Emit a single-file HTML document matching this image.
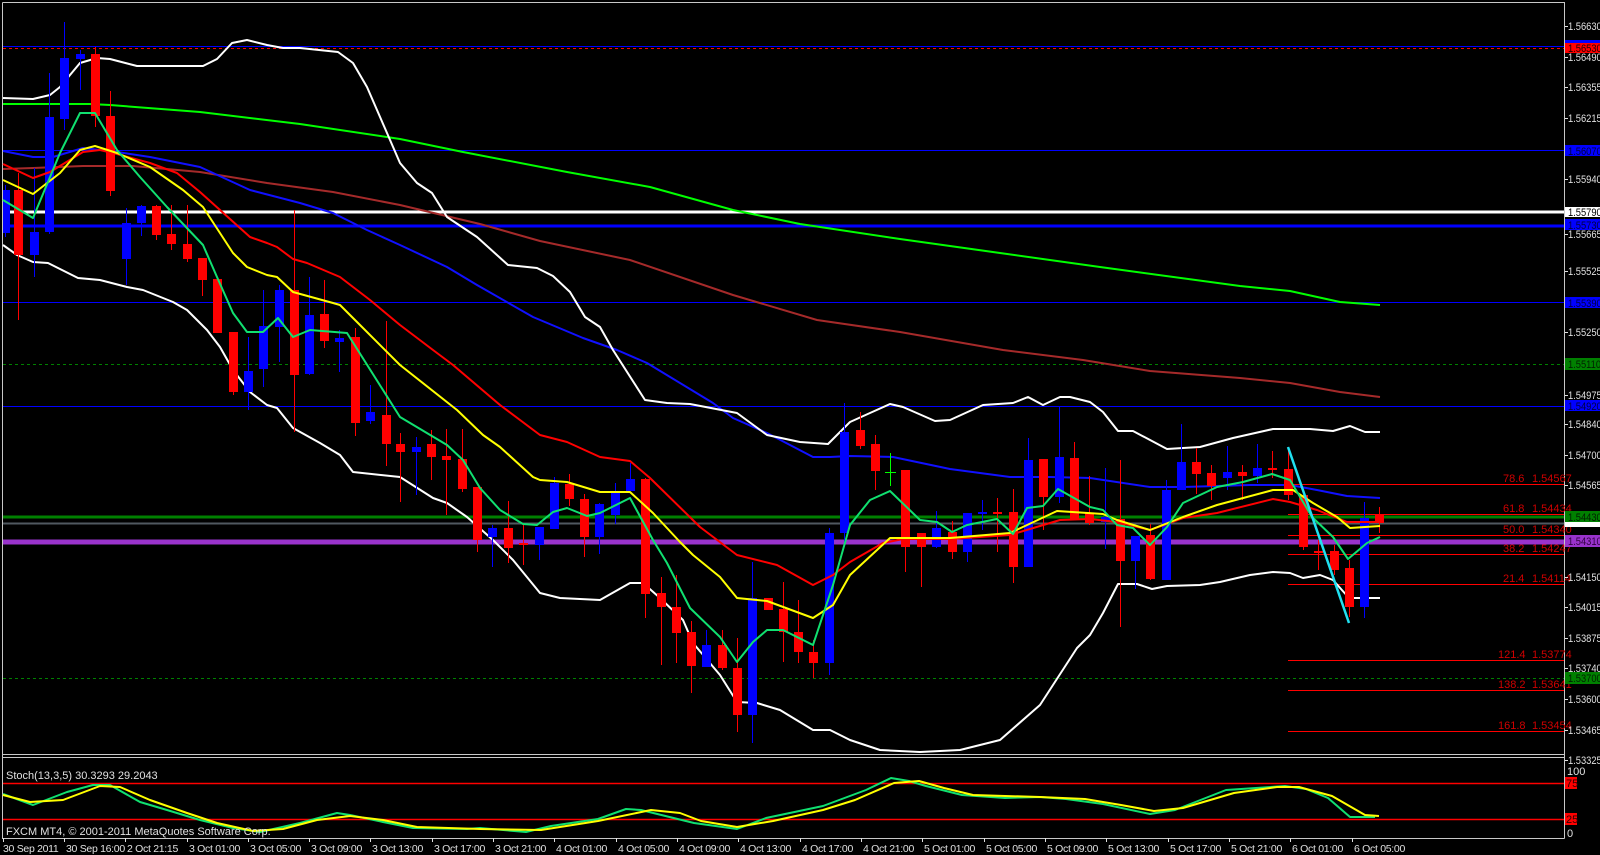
<!DOCTYPE html>
<html><head><meta charset="utf-8"><style>
html,body{margin:0;padding:0;background:#000;width:1600px;height:855px;overflow:hidden}
svg{display:block}
text{font-family:"Liberation Sans",sans-serif;font-size:11px}
.ta text{font-size:10.5px;letter-spacing:-0.3px}
</style></head><body>
<svg width="1600" height="855" viewBox="0 0 1600 855" xmlns="http://www.w3.org/2000/svg">
<rect width="1600" height="855" fill="#000"/>
<g stroke="#c8c8c8" stroke-width="1" fill="none">
<path d="M2.5 2.5H1564.5V838.5M2.5 2.5V838.5H1564.5M2.5 754.5H1564.5M2.5 757.5H1564.5"/>
</g>
<g fill="none">
<path d="M3 46.5H1564M3 150.5H1564M3 302.5H1564M3 406.5H1564" stroke="#0000ff"/>
<path d="M3 48.5H1564" stroke="#ff0000" stroke-dasharray="3,3"/>
<path d="M3 212H1564" stroke="#fff" stroke-width="3"/>
<path d="M3 226H1564" stroke="#0000ff" stroke-width="3"/>
<path d="M3 364.5H1564M3 678.5H1564" stroke="#008000" stroke-dasharray="3,3"/>
<path d="M3 517H1564" stroke="#008000" stroke-width="3"/>
<path d="M3 523.5H1564" stroke="#505860" stroke-width="2"/>
<path d="M3 542H1564" stroke="#9933cc" stroke-width="5"/>
<path d="M1288 484.5H1564M1288 514.5H1564M1288 535.5H1564M1288 554.5H1564M1288 584.5H1564M1288 660.5H1564M1288 690.5H1564M1288 731.5H1564" stroke="#ff0000"/>
</g>
<g fill="none" stroke-width="2" stroke-linejoin="round">
<polyline stroke="#00ff00" points="3,104 90,104 110,105 200,112 300,124 400,139 463,152 567,172 650,187 733,210 800,224 900,239 1000,253 1100,267 1240,286 1290,291 1340,302 1380,305"/>
<polyline stroke="#a52a2a" points="3,169 33,168 83,166 133,166 200,172 267,183 333,192 400,205 480,224 540,241 630,260 733,295 817,320 900,332 1003,350 1083,360 1150,371 1240,378 1290,383 1340,392 1380,397"/>
<polyline stroke="#1010ff" points="3,151 33,157 53,157 83,148 117,152 150,157 200,167 250,190 300,203 333,213 367,230 400,245 447,267 477,285 533,317 583,338 617,350 647,363 713,403 733,418 767,433 813,457 830,457 850,456 893,457 950,469 1010,477 1050,477 1090,478 1150,487 1183,487 1250,485 1290,485 1317,490 1347,496 1380,498"/>
<polyline stroke="#ffffff" points="3,98 33,99 50,95 60,87 80,63 97,58 110,59 137,66 203,66 217,59 232,43 247,40 267,45 283,48 300,48 338,52 353,63 367,87 387,133 400,163 417,183 432,193 447,217 477,237 508,265 537,268 553,276 570,292 585,317 600,327 613,350 645,400 667,403 690,404 737,413 767,435 800,442 828,444 847,425 850,422 870,413 890,404 903,407 935,421 950,420 983,405 1013,403 1028,397 1043,405 1060,397 1070,397 1090,402 1103,412 1118,431 1133,431 1167,449 1183,448 1200,447 1233,438 1273,429 1310,429 1333,431 1350,426 1365,432 1380,432"/>
<polyline stroke="#ffffff" points="3,245 17,255 33,262 48,263 78,278 100,280 127,287 143,290 173,302 187,310 207,330 220,347 233,370 250,392 267,405 277,408 293,428 320,443 340,455 353,472 400,477 433,498 447,503 467,517 493,540 513,560 540,593 560,598 600,600 630,583 643,583 660,598 683,620 693,643 720,675 737,702 757,703 780,710 813,730 830,730 850,740 880,750 920,752 960,750 1000,740 1040,705 1077,648 1090,635 1103,613 1118,584 1137,584 1152,589 1167,586 1200,585 1220,582 1250,575 1273,572 1290,573 1303,578 1320,575 1333,580 1349,598 1380,598"/>
</g>
<g fill="#ff0000">
<path stroke="#ff0000" stroke-width="1" d="M18.5 173V320M95.5 47V127M110.5 91V196M156.5 205V240M171.5 205V250M187.5 205V262M202.5 258V296M217.5 279V333M233.5 332V395M294.5 210V432M324.5 280V348M355.5 328V436M386.5 321V466M400.5 433V502M431.5 430V480M446.5 429V515M462.5 429V492M477.5 487V552M508.5 501V563M523.5 525V565M569.5 474V506M584.5 494V557M645.5 478V618M661.5 577V665M676.5 575V663M691.5 621V693M722.5 630V670M737.5 638V732M768.5 598V610M783.5 582V662M798.5 600V663M813.5 640V678M860.5 412V449M875.5 435V490M905.5 470V572M921.5 533V587M952.5 521V559M997.5 498V552M1013.5 489V583M1043.5 459V530M1074.5 442V520M1089.5 476V525M1120.5 460V627M1150.5 524V580M1196.5 448V494M1211.5 465V500M1242.5 465V500M1272.5 451V478M1288.5 451V500M1303.5 495V550M1318.5 540V570M1334.5 545V575M1349.5 560V617M1379.5 507V533"/>
<rect x="14" y="190" width="9" height="65"/><rect x="91" y="54" width="9" height="62"/><rect x="106" y="116" width="9" height="75"/><rect x="152" y="206" width="9" height="29"/><rect x="167" y="234" width="9" height="10"/><rect x="183" y="244" width="9" height="15"/><rect x="198" y="258" width="9" height="22"/><rect x="213" y="279" width="9" height="54"/><rect x="229" y="332" width="9" height="60"/><rect x="290" y="290" width="9" height="85"/><rect x="320" y="314" width="9" height="27"/><rect x="351" y="337" width="9" height="86"/><rect x="382" y="415" width="9" height="29"/><rect x="396" y="444" width="9" height="8"/><rect x="427" y="444" width="9" height="13"/><rect x="442" y="456" width="9" height="4"/><rect x="458" y="459" width="9" height="30"/><rect x="473" y="487" width="9" height="53"/><rect x="504" y="528" width="9" height="20"/><rect x="519" y="543" width="9" height="2"/><rect x="565" y="484" width="9" height="15"/><rect x="580" y="499" width="9" height="38"/><rect x="641" y="479" width="9" height="115"/><rect x="657" y="593" width="9" height="14"/><rect x="672" y="607" width="9" height="26"/><rect x="687" y="632" width="9" height="34"/><rect x="718" y="645" width="9" height="23"/><rect x="733" y="668" width="9" height="47"/><rect x="764" y="598" width="9" height="12"/><rect x="779" y="609" width="9" height="23"/><rect x="794" y="632" width="9" height="20"/><rect x="809" y="652" width="9" height="11"/><rect x="856" y="430" width="9" height="16"/><rect x="871" y="444" width="9" height="27"/><rect x="901" y="470" width="9" height="77"/><rect x="917" y="533" width="9" height="14"/><rect x="948" y="532" width="9" height="20"/><rect x="993" y="512" width="9" height="2"/><rect x="1009" y="512" width="9" height="55"/><rect x="1039" y="459" width="9" height="38"/><rect x="1070" y="458" width="9" height="62"/><rect x="1085" y="513" width="9" height="10"/><rect x="1116" y="519" width="9" height="42"/><rect x="1146" y="535" width="9" height="44"/><rect x="1192" y="462" width="9" height="12"/><rect x="1207" y="473" width="9" height="13"/><rect x="1238" y="472" width="9" height="4"/><rect x="1268" y="468" width="9" height="2"/><rect x="1284" y="469" width="9" height="26"/><rect x="1299" y="495" width="9" height="52"/><rect x="1314" y="551" width="9" height="2"/><rect x="1330" y="551" width="9" height="19"/><rect x="1345" y="568" width="9" height="39"/><rect x="1375" y="515" width="9" height="8"/>
</g>
<g fill="#0000ff">
<path stroke="#0000ff" stroke-width="1" d="M5.5 185V237M34.5 168V277M49.5 73V234M64.5 22V130M80.5 50V90M126.5 208V285M141.5 205V236M248.5 337V410M263.5 290V387M279.5 285V362M309.5 277V375M339.5 330V372M370.5 385V424M416.5 437V495M492.5 525V567M539.5 527V560M554.5 477V529M599.5 503V554M615.5 483V524M630.5 463V491M706.5 630V667M752.5 562V743M829.5 528V675M844.5 403V545M936.5 511V548M967.5 513V562M982.5 500V530M1028.5 438V567M1059.5 407V503M1105.5 468V549M1135.5 536V589M1166.5 480V580M1181.5 424V490M1227.5 446V490M1257.5 444V483M1364.5 502V618"/>
<rect x="3" y="190" width="7" height="43"/><rect x="30" y="232" width="9" height="23"/><rect x="45" y="117" width="9" height="115"/><rect x="60" y="58" width="9" height="61"/><rect x="76" y="54" width="9" height="5"/><rect x="122" y="223" width="9" height="36"/><rect x="137" y="206" width="9" height="17"/><rect x="244" y="371" width="9" height="21"/><rect x="259" y="326" width="9" height="43"/><rect x="275" y="290" width="9" height="37"/><rect x="305" y="315" width="9" height="59"/><rect x="335" y="338" width="9" height="4"/><rect x="366" y="412" width="9" height="9"/><rect x="412" y="447" width="9" height="5"/><rect x="488" y="528" width="9" height="9"/><rect x="535" y="527" width="9" height="18"/><rect x="550" y="483" width="9" height="46"/><rect x="595" y="504" width="9" height="33"/><rect x="611" y="492" width="9" height="23"/><rect x="626" y="479" width="9" height="12"/><rect x="702" y="645" width="9" height="22"/><rect x="748" y="598" width="9" height="117"/><rect x="825" y="533" width="9" height="130"/><rect x="840" y="432" width="9" height="101"/><rect x="932" y="528" width="9" height="19"/><rect x="963" y="513" width="9" height="39"/><rect x="978" y="512" width="9" height="2"/><rect x="1024" y="460" width="9" height="107"/><rect x="1055" y="457" width="9" height="40"/><rect x="1101" y="517" width="9" height="5"/><rect x="1131" y="536" width="9" height="25"/><rect x="1162" y="490" width="9" height="90"/><rect x="1177" y="462" width="9" height="28"/><rect x="1223" y="472" width="9" height="6"/><rect x="1253" y="468" width="9" height="8"/><rect x="1360" y="518" width="9" height="89"/>
</g>
<path d="M885 472.5H896M890.5 453V486" stroke="#00ff00" fill="none"/>
<g fill="none" stroke-width="2" stroke-linejoin="round">
<polyline stroke="#ff0000" points="3,164 33,178 50,172 83,152 100,150 117,154 150,163 177,173 200,192 220,210 250,237 267,243 277,247 293,259 307,263 340,277 370,300 400,325 433,350 453,365 500,405 540,435 567,442 600,457 630,461 650,478 700,527 737,555 777,565 813,585 833,575 850,562 883,543 903,539 950,539 1010,535 1060,520 1090,519 1117,522 1150,530 1183,518 1217,513 1273,499 1290,502 1317,510 1347,522 1380,522"/>
<polyline stroke="#ffff00" points="3,180 33,194 60,173 80,150 95,146 117,153 150,167 183,190 203,207 233,253 247,267 267,275 277,277 293,292 333,303 340,305 360,325 400,365 457,410 483,435 500,447 533,477 540,480 567,482 600,492 630,492 653,513 680,542 693,555 720,577 737,598 767,601 813,618 833,605 850,575 890,538 950,538 1010,533 1057,511 1103,514 1117,520 1150,530 1183,517 1217,505 1273,490 1293,490 1313,503 1337,517 1350,528 1380,526"/>
<polyline stroke="#10e070" points="3,200 33,218 60,153 80,113 95,113 117,150 140,177 167,207 203,245 217,277 233,313 247,332 263,332 278,318 293,337 310,330 347,333 400,417 447,445 463,460 480,488 500,510 523,524 537,525 553,512 567,508 587,516 600,513 630,498 653,540 667,563 690,608 720,637 737,662 753,642 767,630 783,630 813,645 833,585 850,525 870,500 890,491 920,520 937,522 952,532 967,525 997,519 1013,534 1027,508 1043,506 1058,489 1090,507 1103,510 1117,525 1133,528 1150,545 1167,527 1183,503 1217,487 1243,482 1272,474 1290,480 1312,517 1333,537 1348,559 1367,543 1380,537"/>
</g>
<path d="M1288 447L1349 623" stroke="#20e0f0" stroke-width="2.5"/>
<g fill="#d00000">
<text x="1503" y="482">78.6</text><text x="1532" y="482">1.54567</text>
<text x="1503" y="512">61.8</text><text x="1532" y="512">1.54434</text>
<text x="1503" y="533">50.0</text><text x="1532" y="533">1.54340</text>
<text x="1503" y="552">38.2</text><text x="1532" y="552">1.54247</text>
<text x="1503" y="582">21.4</text><text x="1532" y="582">1.54114</text>
<text x="1498" y="658">121.4</text><text x="1532" y="658">1.53774</text>
<text x="1498" y="688">138.2</text><text x="1532" y="688">1.53641</text>
<text x="1498" y="729">161.8</text><text x="1532" y="729">1.53454</text>
</g>
<g stroke="#e0e0e0"><path d="M1565 26.5h3M1565 57.5h3M1565 87.5h3M1565 118.5h3M1565 179.5h3M1565 234.5h3M1565 271.5h3M1565 332.5h3M1565 395.5h3M1565 424.5h3M1565 455.5h3M1565 485.5h3M1565 577.5h3M1565 607.5h3M1565 638.5h3M1565 668.5h3M1565 699.5h3M1565 730.5h3M1565 760.5h3"/></g>
<g>
<rect x="1565" y="40" width="35" height="3" fill="#0000ff"/>
<rect x="1565" y="43" width="35" height="10" fill="#ff0000"/>
<rect x="1565" y="145" width="35" height="11" fill="#0000ff"/>
<rect x="1565" y="207" width="35" height="10" fill="#fff"/>
<rect x="1565" y="219" width="35" height="11" fill="#0000ff"/>
<rect x="1565" y="297" width="35" height="11" fill="#0000ff"/>
<rect x="1565" y="358" width="35" height="12" fill="#008000"/>
<rect x="1565" y="400" width="35" height="11" fill="#0000ff"/>
<rect x="1565" y="511" width="35" height="11" fill="#008000"/>
<rect x="1565" y="522" width="35" height="5" fill="#fff"/>
<rect x="1565" y="535" width="35" height="12" fill="#9933cc"/>
<rect x="1565" y="672" width="35" height="12" fill="#008000"/>
</g>
<g transform="translate(1568 0) scale(0.85 1) translate(-1568 0)">
<g fill="#e0e0e0">
<text x="1568" y="30">1.56630</text><text x="1568" y="61">1.56490</text><text x="1568" y="91">1.56355</text><text x="1568" y="122">1.56215</text><text x="1568" y="183">1.55940</text><text x="1568" y="238">1.55665</text><text x="1568" y="275">1.55525</text><text x="1568" y="336">1.55250</text><text x="1568" y="399">1.54975</text><text x="1568" y="428">1.54840</text><text x="1568" y="459">1.54700</text><text x="1568" y="489">1.54565</text><text x="1568" y="581">1.54150</text><text x="1568" y="611">1.54015</text><text x="1568" y="642">1.53875</text><text x="1568" y="672">1.53740</text><text x="1568" y="703">1.53600</text><text x="1568" y="734">1.53465</text><text x="1568" y="764">1.53325</text>
</g>
<text x="1568" y="52" fill="#200000">1.56530</text>
<text x="1568" y="155" fill="#000040">1.56070</text>
<text x="1568" y="216" fill="#000">1.55790</text>
<text x="1568" y="229" fill="#000040">1.55730</text>
<text x="1568" y="307" fill="#000040">1.55390</text>
<text x="1568" y="368" fill="#002000">1.55110</text>
<text x="1568" y="410" fill="#000040">1.54920</text>
<text x="1568" y="521" fill="#002000">1.54430</text>
<text x="1568" y="545" fill="#300040">1.54310</text>
<text x="1568" y="682" fill="#002000">1.53700</text>
</g>
<text x="1567" y="775" fill="#e0e0e0">100</text><text x="1567" y="837" fill="#e0e0e0">0</text>
<path d="M3 783.5H1564M3 819.5H1564" stroke="#ff0000" stroke-width="1.5"/>
<rect x="1565" y="777" width="12" height="12" fill="#ff0000"/><text x="1566" y="787" fill="#300000">75</text>
<rect x="1565" y="813" width="12" height="12" fill="#ff0000"/><text x="1566" y="823" fill="#300000">25</text>
<g fill="none" stroke-width="2" stroke-linejoin="round">
<polyline stroke="#10e070" points="3,794 33,805 67,792 93,785 110,785 140,802 167,810 200,820 233,828 260,832 300,823 337,813 350,815 383,822 413,828 467,829 480,828 526,832 551,826 598,819 626,809 641,810 694,823 737,829 766,818 823,806 866,790 891,778 909,781 926,786 962,795 1005,798 1040,797 1066,799 1103,804 1150,814 1175,810 1226,790 1285,786 1306,789 1328,798 1350,817 1375,817"/>
<polyline stroke="#ffff00" points="3,795 30,802 63,800 100,786 120,787 150,800 187,813 217,823 253,831 283,829 317,820 350,816 383,820 417,827 480,829 541,830 598,821 651,810 680,813 701,821 737,827 773,821 823,810 855,800 894,783 919,781 944,788 973,795 1040,797 1085,799 1121,805 1154,811 1183,808 1234,793 1277,787 1299,787 1332,796 1365,815 1379,816"/>
</g>
<text x="6" y="779" fill="#e0e0e0">Stoch(13,3,5) 30.3293 29.2043</text>
<text x="6" y="835" fill="#e0e0e0">FXCM MT4, © 2001-2011 MetaQuotes Software Corp.</text>
<g stroke="#e0e0e0"><path d="M3.5 838v4M64.5 838v4M125.5 838v4M187.5 838v4M248.5 838v4M309.5 838v4M370.5 838v4M432.5 838v4M493.5 838v4M554.5 838v4M616.5 838v4M677.5 838v4M738.5 838v4M800.5 838v4M861.5 838v4M922.5 838v4M984.5 838v4M1045.5 838v4M1106.5 838v4M1168.5 838v4M1229.5 838v4M1290.5 838v4M1352.5 838v4"/></g>
<g fill="#e0e0e0" class="ta">
<text x="3" y="852">30 Sep 2011</text><text x="66" y="852">30 Sep 16:00</text><text x="127" y="852">2 Oct 21:15</text><text x="189" y="852">3 Oct 01:00</text><text x="250" y="852">3 Oct 05:00</text><text x="311" y="852">3 Oct 09:00</text><text x="372" y="852">3 Oct 13:00</text><text x="434" y="852">3 Oct 17:00</text><text x="495" y="852">3 Oct 21:00</text><text x="556" y="852">4 Oct 01:00</text><text x="618" y="852">4 Oct 05:00</text><text x="679" y="852">4 Oct 09:00</text><text x="740" y="852">4 Oct 13:00</text><text x="802" y="852">4 Oct 17:00</text><text x="863" y="852">4 Oct 21:00</text><text x="924" y="852">5 Oct 01:00</text><text x="986" y="852">5 Oct 05:00</text><text x="1047" y="852">5 Oct 09:00</text><text x="1108" y="852">5 Oct 13:00</text><text x="1170" y="852">5 Oct 17:00</text><text x="1231" y="852">5 Oct 21:00</text><text x="1292" y="852">6 Oct 01:00</text><text x="1354" y="852">6 Oct 05:00</text>
</g>
</svg>
</body></html>
